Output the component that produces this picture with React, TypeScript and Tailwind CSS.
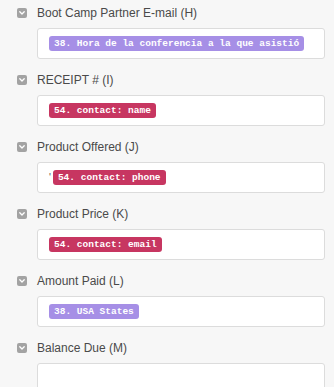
import React from "react";

type Pill = { text: string; color: "purple" | "red"; tick?: boolean };
type Field = { label: string; pill?: Pill };

const fields: Field[] = [
  { label: "Boot Camp Partner E-mail (H)", pill: { text: "38. Hora de la conferencia a la que asistió", color: "purple" } },
  { label: "RECEIPT # (I)", pill: { text: "54. contact: name", color: "red" } },
  { label: "Product Offered (J)", pill: { text: "54. contact: phone", color: "red", tick: true } },
  { label: "Product Price (K)", pill: { text: "54. contact: email", color: "red" } },
  { label: "Amount Paid (L)", pill: { text: "38. USA States", color: "purple" } },
  { label: "Balance Due (M)" },
];

function Check() {
  return (
    <span className="flex h-[10px] w-[10px] items-center justify-center rounded-[2px] bg-[#a3a3a3]">
      <svg width="6" height="4" viewBox="0 0 6 4" fill="none">
        <path d="M0.8 0.8 L3 3 L5.2 0.8" stroke="#ffffff" strokeWidth="1.3" strokeLinecap="round" strokeLinejoin="round" />
      </svg>
    </span>
  );
}

export default function App() {
  return (
    <div className="h-[387px] w-[334px] overflow-hidden bg-[#f7f7f7] pt-[5px]" style={{ fontFamily: '"Liberation Sans", Arial, sans-serif' }}>
      {fields.map((f, i) => (
        <div key={i} className="mb-[13px]">
          <div className="flex h-[16px] items-center gap-[10px] pl-[17px]">
            <Check />
            <span className="text-[12px] leading-[16px] text-[#4a4a4a]">{f.label}</span>
          </div>
          <div
            className={
              "ml-[37px] mt-[7px] w-[288px] rounded-[3px] border border-[#dcdcdc] bg-white pl-[11px] " +
              (f.pill ? "flex h-[31px] items-center" : "h-[60px] pt-[20px]")
            }
          >
            {f.pill ? (
              <div className="flex items-center">
                {f.pill.tick && <span className="mr-[2px] text-[10px] leading-none text-[#555]">'</span>}
                <span
                  className={
                    "flex h-[15px] items-center rounded-[3px] px-[5px] text-[9.5px] font-bold leading-none text-white " +
                    (f.pill.color === "purple" ? "bg-[#a68fe6]" : "bg-[#c73661]")
                  }
                  style={{ fontFamily: '"Liberation Mono", "Courier New", monospace' }}
                >
                  {f.pill.text}
                </span>
              </div>
            ) : (
              <div className="pr-[10px] text-right text-[11px] text-[#b5b5b5]">Enter text or insert data...</div>
            )}
          </div>
        </div>
      ))}
    </div>
  );
}
